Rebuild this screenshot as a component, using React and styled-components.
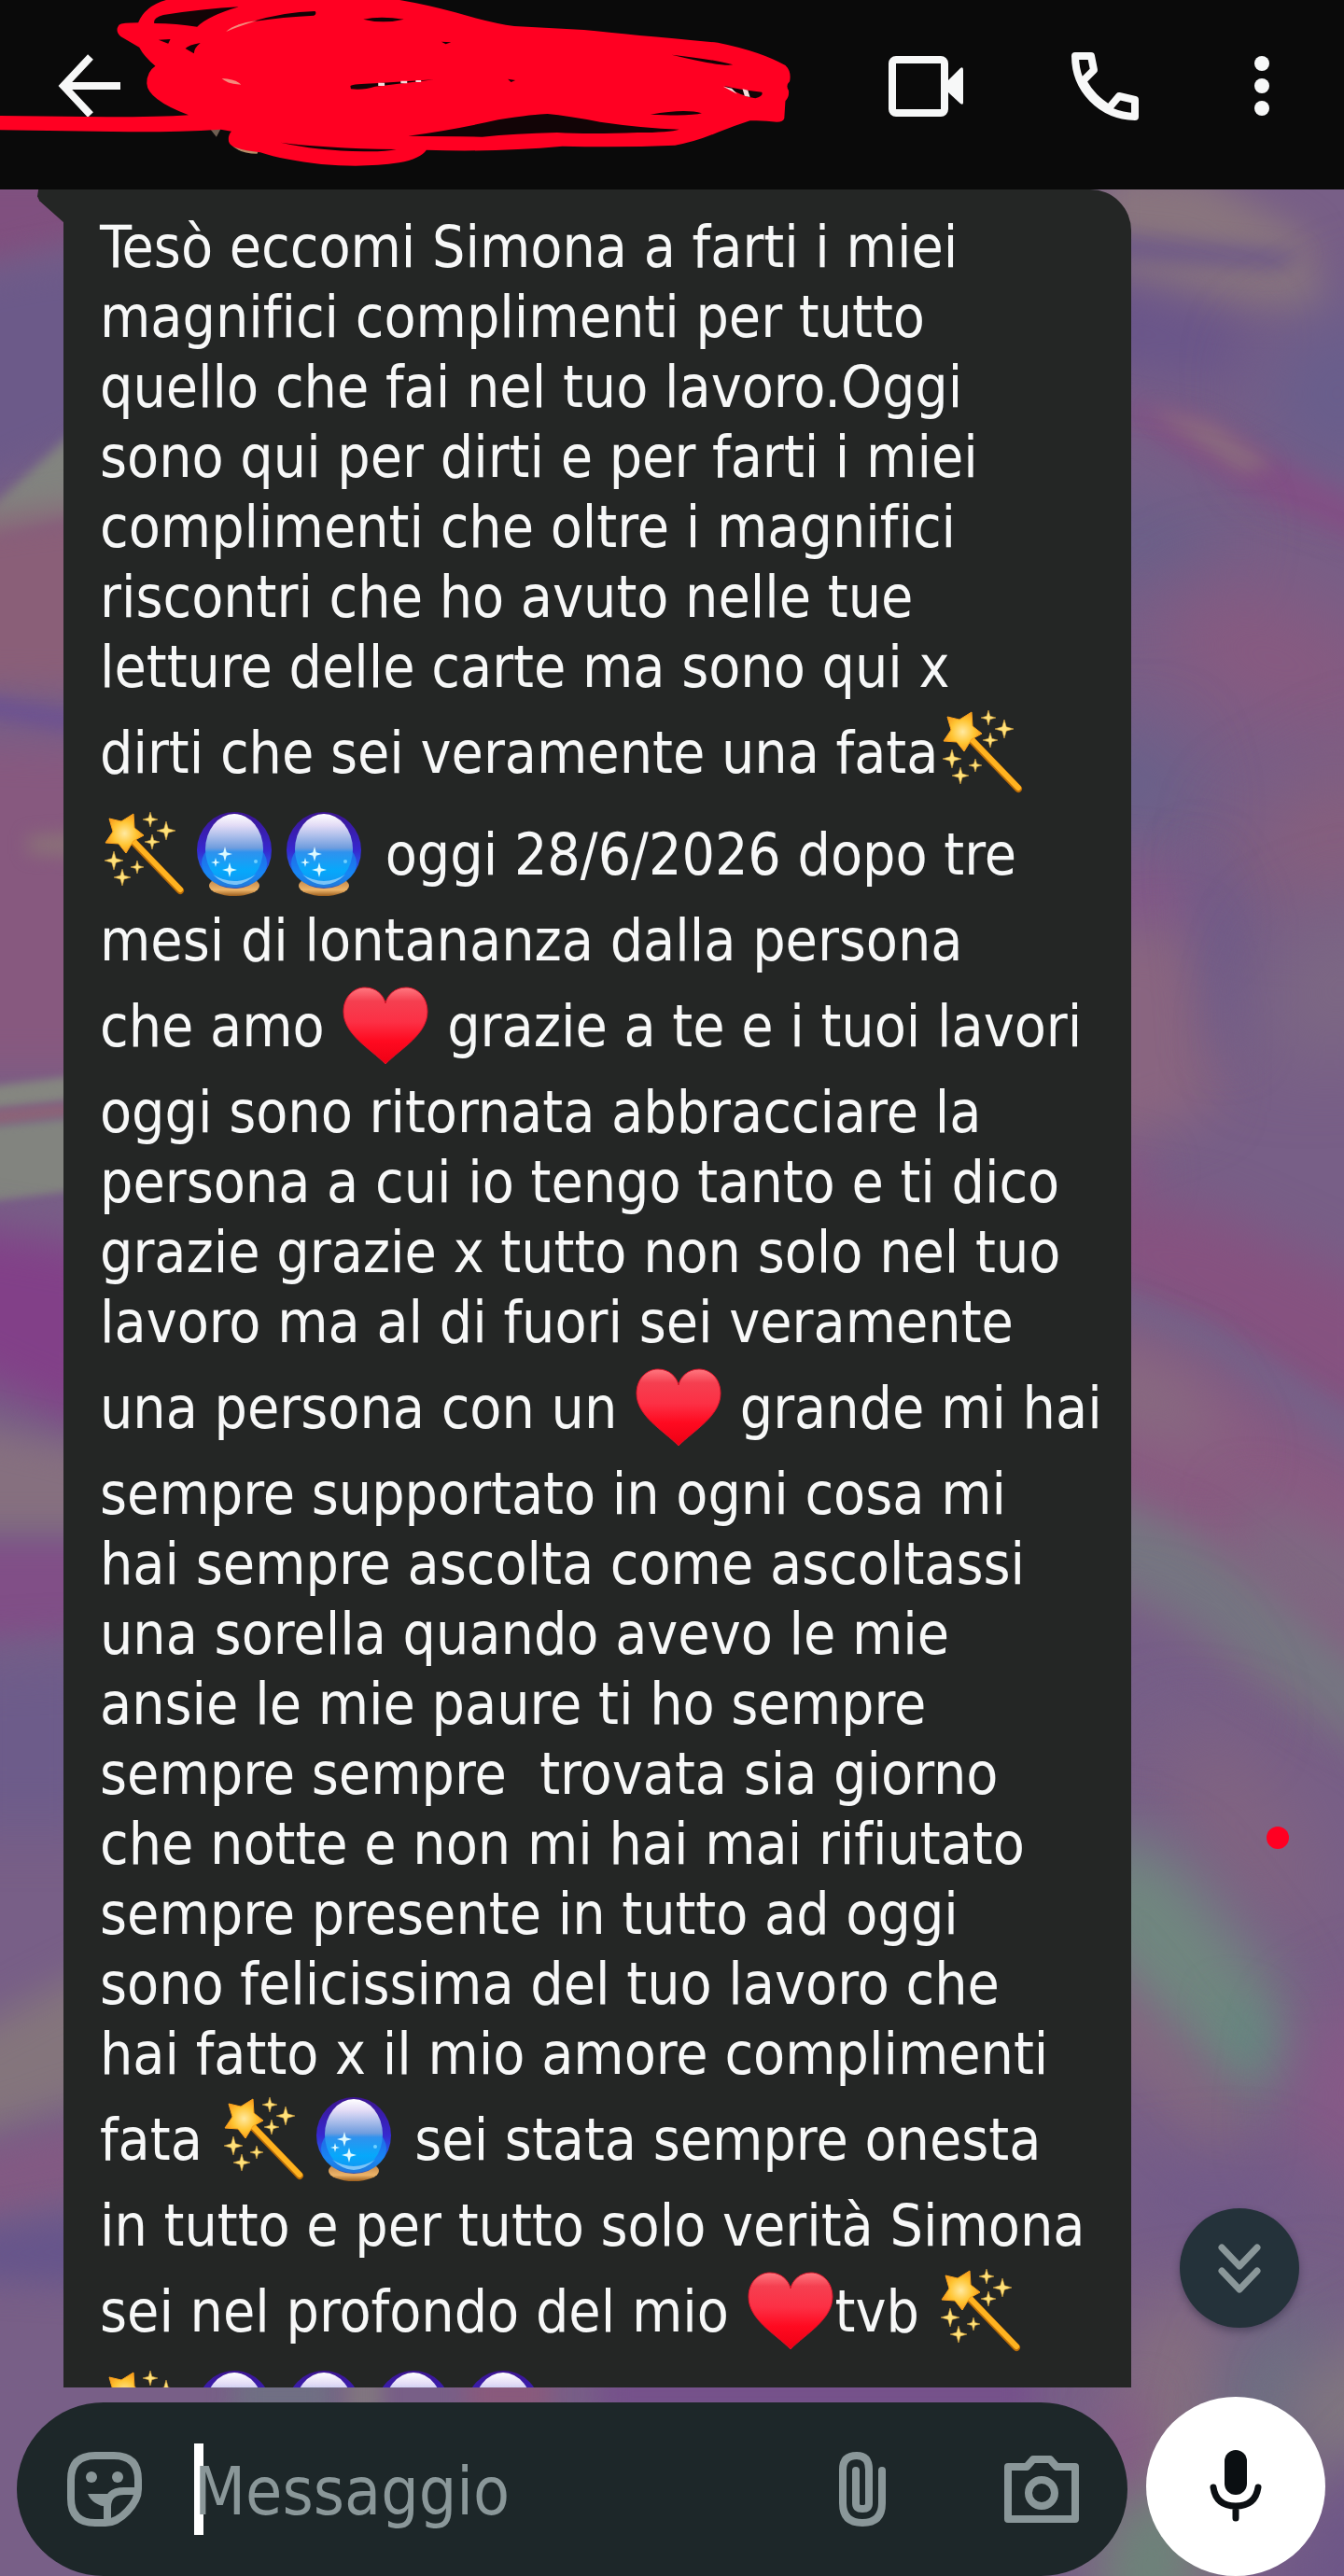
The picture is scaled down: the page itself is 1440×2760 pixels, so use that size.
import styled, { createGlobalStyle } from "styled-components";

const GlobalStyle = createGlobalStyle`
  * {
    box-sizing: border-box;
  }
  body {
    margin: 0;
    background: #0a0a0a;
    font-family: "DejaVu Sans Condensed", "Noto Sans", sans-serif;
    font-variant-ligatures: none;
  }
`;

const Screen = styled.div`
  position: relative;
  display: flex;
  flex-direction: column;
  height: 100vh;
  overflow: hidden;
`;

const Header = styled.header`
  position: relative;
  z-index: 1;
  display: flex;
  align-items: center;
  justify-content: space-between;
  flex-shrink: 0;
  height: 203px;
  padding: 0 64px 20px 48px;
  background: #0a0a0a;
`;

const Actions = styled.div`
  display: flex;
  align-items: center;
  gap: 96px;
`;

const IconButton = styled.button`
  display: flex;
  align-items: center;
  justify-content: center;
  flex-shrink: 0;
  width: ${(props) => props.$width || 96}px;
  height: 96px;
  padding: 0;
  border: 0;
  background: none;
  color: ${(props) => props.$color || "#f7f8f8"};
  cursor: pointer;
`;

const Scribble = styled.svg`
  position: absolute;
  top: 0;
  left: 0;
  pointer-events: none;
`;

const Chat = styled.main`
  position: relative;
  display: flex;
  flex-direction: column;
  flex: 1;
  min-height: 0;
`;

const WallpaperArt = styled.svg`
  position: absolute;
  inset: 0;
  width: 100%;
  height: 100%;
`;

const Messages = styled.section`
  position: relative;
  flex: 1;
  min-height: 0;
  overflow: hidden;
  padding: 0 228px 0 68px;
`;

const Bubble = styled.article`
  position: relative;
  padding: 24px 39px 40px;
  border-radius: 0 44px 0 0;
  background: #242625;
  color: #f7f8f8;
  font-size: 62px;

  &::before {
    content: "";
    position: absolute;
    top: 0;
    left: -28px;
    width: 29px;
    height: 36px;
    background: #242625;
    clip-path: polygon(4% 0, 100% 0, 100% 100%, 8% 34%, 0 20%);
  }
`;

const Line = styled.p`
  margin: 0;
  line-height: ${(props) => (props.$tall ? 109 : 75)}px;
  white-space: pre;
`;

const EmojiArt = styled.svg`
  width: 96px;
  height: 96px;
  vertical-align: -26px;
`;

const RedDot = styled.span`
  position: absolute;
  top: 1754px;
  right: 59px;
  width: 24px;
  height: 24px;
  border-radius: 50%;
  background: #ff0022;
`;

const ScrollButton = styled.button`
  position: absolute;
  right: 48px;
  bottom: 266px;
  display: flex;
  align-items: center;
  justify-content: center;
  width: 128px;
  height: 128px;
  padding: 0;
  border: 0;
  border-radius: 50%;
  background: #24323a;
  color: #8a9799;
  box-shadow: 0 4px 8px rgba(30, 30, 50, 0.4);
`;

const Footer = styled.form`
  position: relative;
  display: flex;
  align-items: flex-end;
  flex-shrink: 0;
  gap: 20px;
  padding: 10px 20px 0 18px;
`;

const Composer = styled.div`
  display: flex;
  align-items: center;
  flex: 1;
  min-width: 0;
  height: 186px;
  padding: 0 44px 0 46px;
  border-radius: 93px;
  background: #1d2729;
`;

const Field = styled.label`
  position: relative;
  display: flex;
  flex: 1;
  min-width: 0;
  margin-left: 48px;
`;

const Caret = styled.span`
  position: absolute;
  top: 0;
  left: 0;
  width: 10px;
  height: 98px;
  background: #ffffff;
`;

const TextInput = styled.input`
  position: relative;
  width: 100%;
  height: 98px;
  padding: 4px 0 0;
  border: 0;
  outline: 0;
  background: none;
  color: #f7f8f8;
  font-family: inherit;
  font-size: 71px;

  &::placeholder {
    color: #8a9799;
    opacity: 1;
  }
`;

const MicButton = styled.button`
  display: flex;
  align-items: center;
  justify-content: center;
  flex-shrink: 0;
  width: 192px;
  height: 192px;
  padding: 0;
  border: 0;
  border-radius: 50%;
  background: #ffffff;
  color: #0b0f12;
`;

const sparkle = (x, y, r) => {
  const k = r * 0.22;
  return `M${x} ${y - r}L${x + k} ${y - k}L${x + r} ${y}L${x + k} ${y + k}L${x} ${y + r}L${x - k} ${y + k}L${x - r} ${y}L${x - k} ${y - k}Z`;
};

const Wand = () => (
  <EmojiArt viewBox="0 0 96 96" role="img" aria-label="bacchetta magica">
    <defs>
      <radialGradient id="star" cx="0.5" cy="0.5" r="0.6">
        <stop offset="0" stopColor="#ffe9a0" />
        <stop offset="0.5" stopColor="#ffc533" />
        <stop offset="1" stopColor="#f58a12" />
      </radialGradient>
    </defs>
    <path d="M34 33L86 87" stroke="#b86a08" strokeWidth="8" strokeLinecap="round" />
    <path d="M34 32L86 86" stroke="#ffb320" strokeWidth="6" strokeLinecap="round" />
    <path
      d="M36 5L37 20L47 28L36 34L28 47L20 37L6 36L14 24L10 10L23 13Z"
      fill="url(#star)"
      stroke="#f9a11b"
      strokeWidth="1"
      strokeLinejoin="round"
    />
    <path
      d={[[54, 11, 8], [71, 23, 10], [56, 35, 8], [15, 55, 10], [40, 62, 7], [24, 73, 9]]
        .map((s) => sparkle(...s))
        .join("")}
      fill="#ffe27a"
      stroke="#d9a23a"
      strokeWidth="0.6"
    />
  </EmojiArt>
);

const Orb = () => (
  <EmojiArt viewBox="0 0 96 96" role="img" aria-label="sfera di cristallo">
    <defs>
      <linearGradient id="rim" x2="0" y2="1">
        <stop offset="0" stopColor="#3c1490" />
        <stop offset="0.5" stopColor="#3628cf" />
        <stop offset="0.8" stopColor="#1d6df0" />
        <stop offset="1" stopColor="#3a4fae" />
      </linearGradient>
      <linearGradient id="glass" x2="0" y2="1">
        <stop offset="0" stopColor="#ffffff" />
        <stop offset="0.16" stopColor="#e3dcf6" />
        <stop offset="0.48" stopColor="#6f9dde" />
        <stop offset="0.54" stopColor="#2f92ee" />
        <stop offset="0.8" stopColor="#06a8fb" />
        <stop offset="1" stopColor="#1296f2" />
      </linearGradient>
      <linearGradient id="stand" x2="0" y2="1">
        <stop offset="0" stopColor="#b0723a" />
        <stop offset="0.7" stopColor="#edb469" />
        <stop offset="1" stopColor="#9a5d1d" />
      </linearGradient>
    </defs>
    <ellipse cx="48" cy="82" rx="27" ry="11" fill="url(#stand)" />
    <ellipse cx="48" cy="44" rx="40" ry="41" fill="url(#rim)" />
    <ellipse cx="48" cy="58" rx="35" ry="26" fill="#139bf7" opacity="0.55" />
    <ellipse cx="48" cy="43" rx="31" ry="38" fill="url(#glass)" />
    <path d="M25 70Q48 92 71 70Q48 84 25 70Z" fill="#7cc4f7" />
    <path d={sparkle(38, 48, 8) + sparkle(43, 65, 8) + sparkle(28, 57, 5)} fill="#ddfaff" />
    <circle cx="71" cy="56" r="2" fill="#6fd0ff" />
  </EmojiArt>
);

const Heart = () => (
  <EmojiArt viewBox="0 0 96 96" role="img" aria-label="cuore rosso">
    <defs>
      <linearGradient id="heart" x2="0" y2="1">
        <stop offset="0" stopColor="#ff7880" />
        <stop offset="0.18" stopColor="#f53f50" />
        <stop offset="0.45" stopColor="#fc3045" />
        <stop offset="0.7" stopColor="#ff0a20" />
        <stop offset="1" stopColor="#ee0014" />
      </linearGradient>
    </defs>
    <path
      d="M48 89C31 72 3 57 3 33C3 17 14 7 26 7C38 7 46 15 48 24C50 15 58 7 70 7C82 7 93 17 93 33C93 57 65 72 48 89Z"
      fill="url(#heart)"
      stroke="#d9142a"
      strokeWidth="1"
    />
  </EmojiArt>
);

const EMOJI = { W: Wand, O: Orb, H: Heart };

// {W} wand, {O} crystal ball, {H} heart
const MESSAGE = [
  "Tesò eccomi Simona a farti i miei",
  "magnifici complimenti per tutto",
  "quello che fai nel tuo lavoro.Oggi",
  "sono qui per dirti e per farti i miei",
  "complimenti che oltre i magnifici",
  "riscontri che ho avuto nelle tue",
  "letture delle carte ma sono qui x",
  "dirti che sei veramente una fata{W}",
  "{W}{O}{O} oggi 28/6/2026 dopo tre",
  "mesi di lontananza dalla persona",
  "che amo {H} grazie a te e i tuoi lavori",
  "oggi sono ritornata abbracciare la",
  "persona a cui io tengo tanto e ti dico",
  "grazie grazie x tutto non solo nel tuo",
  "lavoro ma al di fuori sei veramente",
  "una persona con un {H} grande mi hai",
  "sempre supportato in ogni cosa mi",
  "hai sempre ascolta come ascoltassi",
  "una sorella quando avevo le mie",
  "ansie le mie paure ti ho sempre",
  "sempre sempre  trovata sia giorno",
  "che notte e non mi hai mai rifiutato",
  "sempre presente in tutto ad oggi",
  "sono felicissima del tuo lavoro che",
  "hai fatto x il mio amore complimenti",
  "fata {W}{O} sei stata sempre onesta",
  "in tutto e per tutto solo verità Simona",
  "sei nel profondo del mio {H}tvb {W}",
  "{W}{O}{O}{O}{O}",
];

const MessageLine = ({ text }) => {
  const parts = text.split(/\{(\w)\}/);
  return (
    <Line $tall={parts.length > 1}>
      {parts.map((part, i) => {
        if (i % 2 === 0) return part;
        const Emoji = EMOJI[part];
        return <Emoji key={i} />;
      })}
    </Line>
  );
};

// soft colour streaks: [points, colour, blur]
const STREAKS = [
  ["-60,180 120,180 120,250 -60,300", "#80507f", 18],
  ["-60,300 120,270 120,460 -60,540", "#6c5a89", 18],
  ["-60,590 120,425 120,545 -60,590", "#82847f", 6],
  ["-60,565 120,540 120,740 -60,735", "#8a5f78", 18],
  ["-60,738 120,770 120,796 -60,758", "#6c5292", 9],
  ["-60,795 120,800 120,1150 -60,1150", "#87597f", 20],
  ["30,895 120,890 120,920 30,915", "#8a7078", 9],
  ["-60,1170 120,1148 120,1174 -60,1194", "#858680", 4],
  ["-60,1194 120,1178 120,1192 -60,1212", "#8c6478", 4],
  ["-60,1212 120,1194 120,1270 -60,1294", "#82847f", 4],
  ["-60,1310 120,1340 120,1540 -60,1460", "#824088", 24],
  ["-60,1520 120,1560 120,1640 -60,1640", "#86707f", 18],
  ["-60,1655 120,1655 120,1750 -60,1760", "#814f87", 14],
  ["-60,1780 120,1770 120,1960 -60,1960", "#6d5c8a", 28],
  ["-60,2190 120,2100 120,2240 -60,2300", "#84757c", 20],
  ["-60,2315 120,2270 120,2340 -60,2385", "#825a83", 16],
  ["-60,2395 120,2370 120,2450 -60,2440", "#66558b", 18],
  ["1180,180 1290,190 1400,252 1420,332 1320,330 1180,290", "#89757e", 18],
  ["1160,246 1400,270 1370,290 1160,276", "#715c88", 10],
  ["1160,300 1340,345 1330,410 1160,390", "#68558a", 30],
  ["1350,380 1500,300 1500,520 1370,490", "#685e8c", 40],
  ["1180,428 1280,448 1500,560 1500,600 1330,525", "#834f85", 14],
  ["1230,438 1300,455 1365,500 1330,506", "#8b6c7e", 10],
  ["1160,520 1320,560 1290,620 1160,630", "#696089", 36],
  ["1240,655 1330,620 1500,700 1500,790 1330,770 1240,700", "#885a80", 44],
  ["1160,790 1250,790 1280,880 1160,890", "#66618a", 36],
  ["1340,880 1500,800 1500,960 1330,950", "#885f7c", 44],
  ["1160,930 1280,940 1300,1000 1160,1010", "#835888", 30],
  ["1160,1005 1270,990 1302,1080 1300,1190 1160,1240", "#896580", 26],
  ["1280,900 1330,980 1330,1120 1300,1130 1290,1000", "#6d5b89", 26],
  ["1380,1010 1500,970 1500,1120 1350,1130", "#7d6983", 44],
  ["1160,1230 1240,1250 1200,1300 1160,1300", "#8a5584", 24],
  ["1160,1275 1300,1300 1500,1390 1500,1560 1300,1440 1160,1360", "#865280", 28],
  ["1160,1370 1300,1420 1500,1550 1500,1600 1300,1460 1160,1400", "#746389", 14],
  ["1160,1415 1300,1475 1500,1600 1500,1860 1160,1690", "#8a5a82", 28],
  ["1160,1430 1270,1470 1330,1570 1160,1520", "#876b80", 32],
  ["1330,1600 1500,1680 1500,1770 1330,1680", "#7d6b82", 30],
  ["1160,1590 1280,1640 1500,1810 1500,1900 1300,1770 1160,1690", "#757681", 22],
  ["1160,1730 1260,1750 1330,1850 1160,1850", "#765f88", 40],
  ["1240,1850 1340,1880 1440,2080 1300,2020", "#836580", 44],
  ["1160,1950 1260,1990 1370,2130 1385,2220 1340,2260 1160,2100", "#70877f", 32],
  ["1310,2140 1355,2170 1365,2215 1330,2205", "#5c8c80", 24],
  ["1160,2080 1330,2270 1320,2320 1160,2170", "#86697f", 28],
  ["1400,2170 1500,2120 1500,2350 1380,2300", "#875987", 38],
  ["1160,2340 1340,2320 1440,2380 1240,2390", "#70598a", 38],
  ["1210,2480 1310,2460 1290,2820 1190,2820", "#87707f", 36],
  ["1330,2520 1420,2440 1390,2620 1300,2640", "#6a7381", 36],
  ["1380,2560 1500,2480 1500,2620 1410,2660", "#80787f", 32],
  ["1180,2600 1225,2560 1225,2680 1190,2700", "#855a85", 22],
  ["1190,2690 1290,2660 1270,2820 1180,2820", "#6c8379", 28],
  ["1370,2740 1500,2600 1500,2820 1370,2820", "#6e5787", 28],
  ["250,2540 360,2540 360,2590 250,2590", "#6f7083", 14],
  ["370,2540 410,2540 410,2590 370,2590", "#80757f", 9],
  ["500,2540 590,2540 590,2590 500,2590", "#895a7c", 12],
  ["640,2540 1110,2540 1110,2590 640,2590", "#75508b", 16],
];

const Wallpaper = () => (
  <WallpaperArt viewBox="0 203 1440 2557" preserveAspectRatio="none" aria-hidden="true">
    <rect y="203" width="1440" height="2557" fill="#785f87" />
    {STREAKS.map(([points, fill, blur]) => (
      <polygon key={points} points={points} fill={fill} style={{ filter: `blur(${blur}px)` }} />
    ))}
  </WallpaperArt>
);

const NameScribble = () => (
  <Scribble width="900" height="260" viewBox="0 0 1568 780" preserveAspectRatio="none" aria-hidden="true">
    <path d="M392 414L412 414L404 440Z" fill="#6e5f52" />
    <path d="M430 462L486 470L480 494Q446 494 430 462Z" fill="#b58f68" />
    <path
      fill="#ff0022"
      d="M0 372L200 376Q300 376 352 370Q275 320 274 268Q274 230 290 212Q268 180 260 152L225 117Q214 100 222 80Q228 73 258 73Q270 20 310 0L746 0Q800 16 850 40Q920 75 960 84L1090 96Q1180 112 1340 137Q1420 165 1466 210Q1478 230 1474 262Q1466 275 1472 290Q1474 310 1466 325L1464 380Q1462 392 1450 392Q1425 386 1400 388Q1370 405 1340 425Q1300 455 1260 467Q1160 475 1050 470Q920 490 796 482Q785 510 745 523Q680 540 600 528Q530 515 486 490Q430 480 427 455Q425 435 432 422L412 416Q330 425 240 424L0 418Z"
    />
    <path
      fill="#120406"
      d="M288 75Q285 58 305 48Q380 28 446 22Q390 50 368 86Q330 76 288 75ZM470 70Q530 38 588 36Q592 44 586 50Q530 54 470 70ZM678 62Q710 50 754 62Q715 78 678 62ZM296 128L318 126L314 140ZM346 156Q352 144 374 138Q362 155 362 172ZM654 276Q660 270 700 268L810 256L700 278Q680 290 655 286ZM1254 176Q1330 190 1368 208Q1350 216 1254 176ZM1352 276Q1380 288 1422 296Q1426 308 1410 316Q1385 310 1352 276ZM1214 368Q1280 348 1310 364Q1290 374 1214 368ZM762 437Q840 420 930 385Q1000 366 1022 366Q1060 372 1120 392Q1200 412 1268 416Q1250 426 1190 426Q1100 432 1040 426Q960 430 900 440Q840 438 762 437ZM524 458Q600 476 740 480Q720 488 680 487Q590 484 524 458ZM948 254L962 258L954 264ZM824 134L842 136L832 142Z"
    />
    <path d="M422 102Q436 76 480 66Q450 82 422 102ZM414 252Q440 254 450 272Q424 270 414 252Z" fill="#f58a7c" />
    <path d="M706 266h12v10h-12zM748 260h12v8h-12zM776 258h10v6h-10zM1350 278L1366 284L1376 302ZM1386 286L1396 290L1400 312L1390 308Z" fill="#f4dcdc" />
  </Scribble>
);

const App = () => {
  return (
    <>
      <GlobalStyle />
      <Screen>
        <Header>
          <IconButton type="button" aria-label="Indietro">
            <svg width="72" height="72" viewBox="0 0 72 72" fill="none" stroke="currentColor" strokeWidth="8">
              <path d="M69 36H9M37 5L8 36L37 67" />
            </svg>
          </IconButton>
          <Actions>
            <IconButton type="button" aria-label="Videochiamata">
              <svg width="84" height="72" viewBox="0 0 84 72">
                <rect x="6" y="8" width="56" height="57" rx="4" fill="none" stroke="currentColor" strokeWidth="8" />
                <path d="M65 31L79 17Q82 15 82 19V54Q82 57 79 55L65 42Z" fill="currentColor" />
              </svg>
            </IconButton>
            <IconButton type="button" aria-label="Chiamata">
              <svg
                width="76"
                height="76"
                viewBox="0 0 76 76"
                fill="none"
                stroke="currentColor"
                strokeWidth="8"
                strokeLinejoin="round"
              >
                <path d="M6 6H23L26 21L14 33C22 47 30 54 42 62L53 49L70 53V71C34 70 6 42 6 6Z" />
              </svg>
            </IconButton>
            <IconButton type="button" aria-label="Altre opzioni" $width={48}>
              <svg width="20" height="72" viewBox="0 0 20 72" fill="currentColor">
                <circle cx="10" cy="12" r="8" />
                <circle cx="10" cy="36" r="8" />
                <circle cx="10" cy="60" r="8" />
              </svg>
            </IconButton>
          </Actions>
          <NameScribble />
        </Header>
        <Chat>
          <Wallpaper />
          <Messages>
            <Bubble>
              {MESSAGE.map((text, i) => (
                <MessageLine key={i} text={text} />
              ))}
            </Bubble>
          </Messages>
          <RedDot />
          <ScrollButton type="button" aria-label="Vai in fondo">
            <svg
              width="52"
              height="56"
              viewBox="0 0 52 56"
              fill="none"
              stroke="currentColor"
              strokeWidth="7"
              strokeLinecap="round"
              strokeLinejoin="round"
            >
              <path d="M7 6L26 26L45 6M7 31L26 51L45 31" />
            </svg>
          </ScrollButton>
          <Footer onSubmit={(e) => e.preventDefault()}>
            <Composer>
              <IconButton type="button" aria-label="Emoji" $color="#8a9799">
                <svg width="82" height="82" viewBox="0 0 82 82" fill="none" stroke="currentColor" strokeWidth="8">
                  <path d="M31 5H51Q77 5 77 31V41C77 56 58 77 42 77H31Q5 77 5 51V31Q5 5 31 5Z" />
                  <path d="M77 43H62Q44 43 44 60V77" />
                  <circle cx="27" cy="28" r="6" fill="currentColor" stroke="none" />
                  <circle cx="55" cy="28" r="6" fill="currentColor" stroke="none" />
                  <path d="M23 46H52L44 60Q28 58 23 46Z" fill="currentColor" stroke="none" />
                </svg>
              </IconButton>
              <Field>
                <Caret />
                <TextInput type="text" placeholder="Messaggio" aria-label="Messaggio" />
              </Field>
              <Actions>
                <IconButton type="button" aria-label="Allega" $color="#8a9799">
                  <svg
                    width="52"
                    height="82"
                    viewBox="0 0 52 82"
                    fill="none"
                    stroke="currentColor"
                    strokeWidth="8"
                    strokeLinecap="round"
                  >
                    <path d="M47 21V56Q47 77 26 77Q5 77 5 56V20Q5 5 20 5Q33 5 33 20V56Q33 62 26 62Q19 62 19 56V21" />
                  </svg>
                </IconButton>
                <IconButton type="button" aria-label="Fotocamera" $color="#8a9799">
                  <svg width="82" height="74" viewBox="0 0 82 74" fill="none" stroke="currentColor" strokeWidth="8">
                    <path d="M5 13H25L32 5H50L57 13H77V69H5Z" strokeLinejoin="round" />
                    <circle cx="41" cy="41" r="14" />
                  </svg>
                </IconButton>
              </Actions>
            </Composer>
            <MicButton type="button" aria-label="Messaggio vocale">
              <svg width="58" height="80" viewBox="0 0 58 80">
                <rect x="17" y="1" width="24" height="48" rx="12" fill="currentColor" />
                <path
                  d="M5 41Q8 61 29 61Q50 61 53 41M29 61V74"
                  fill="none"
                  stroke="currentColor"
                  strokeWidth="7"
                  strokeLinecap="round"
                />
              </svg>
            </MicButton>
          </Footer>
        </Chat>
      </Screen>
    </>
  );
};

export default App;
